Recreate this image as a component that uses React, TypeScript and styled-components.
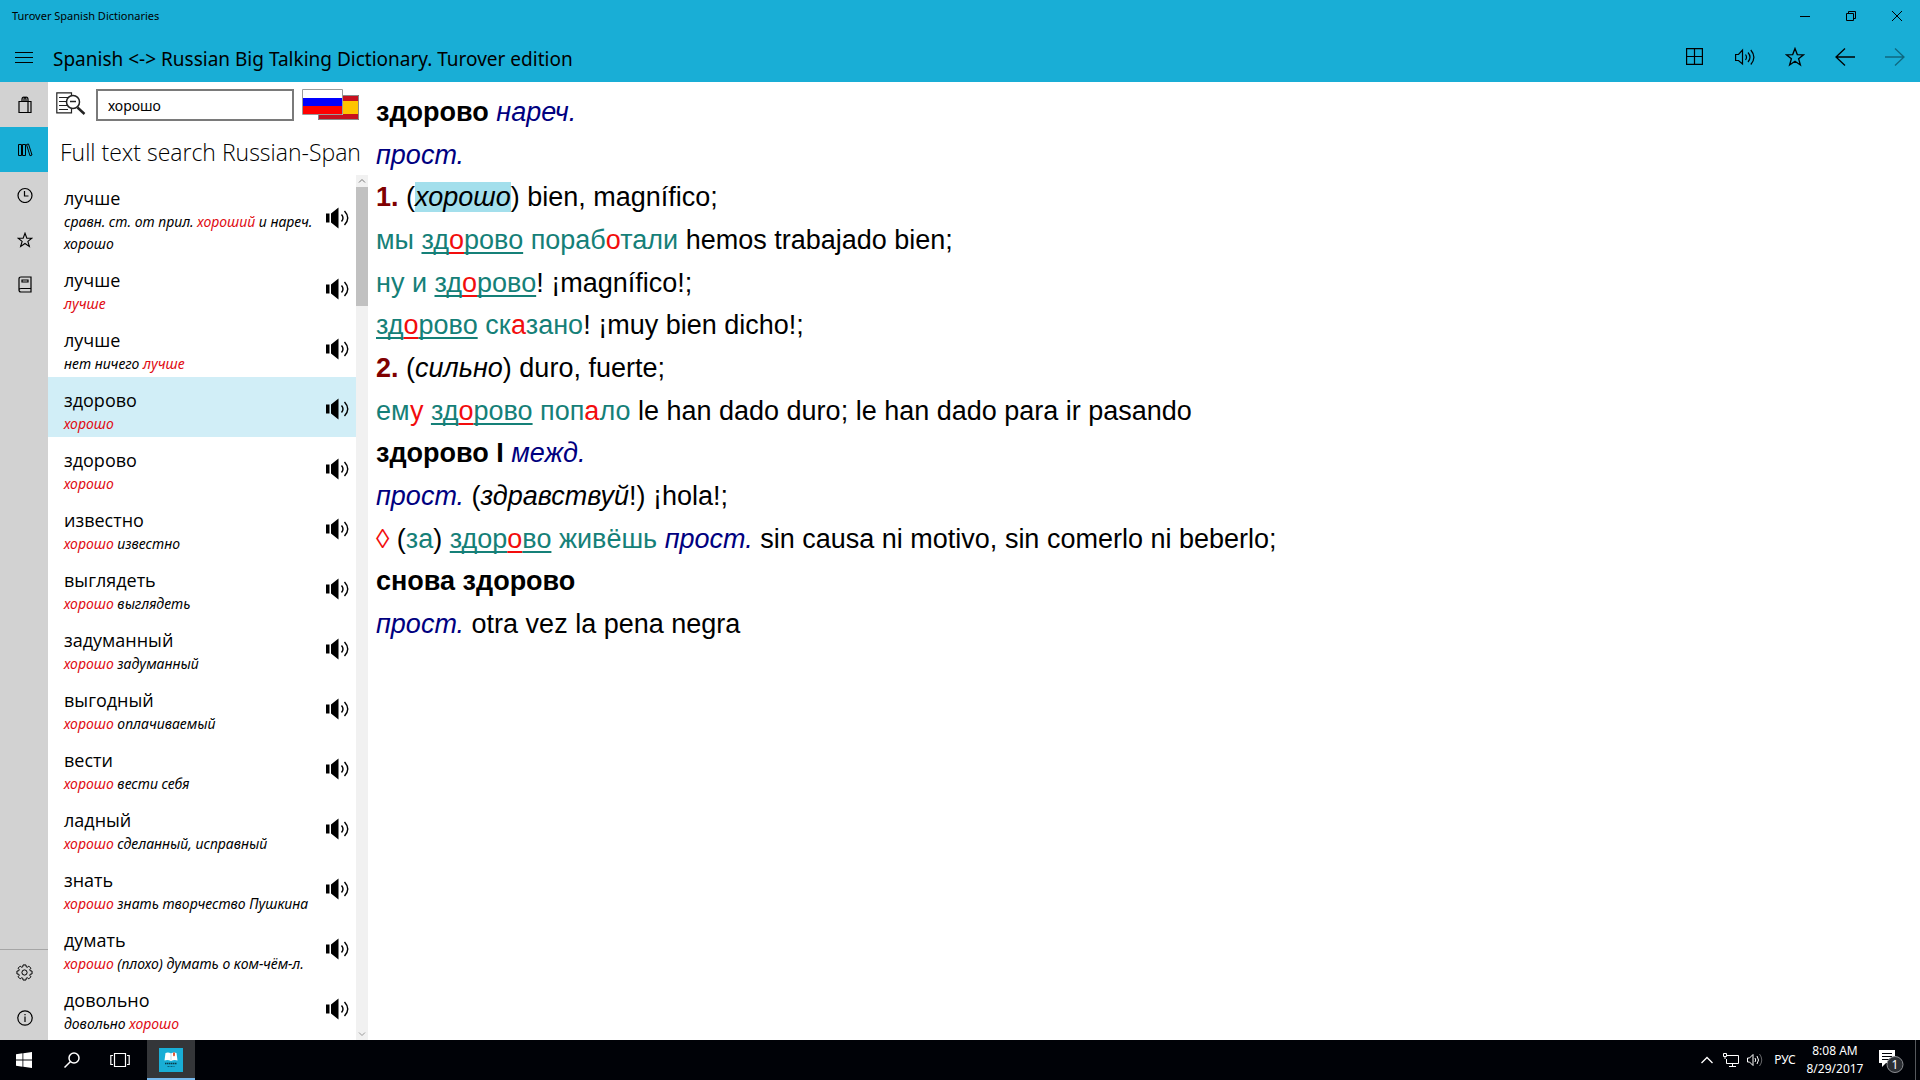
import React from "react";
import styled, { createGlobalStyle, css } from "styled-components";

const ui = `"Noto Sans", "Open Sans", sans-serif`;
const accent = "#19aed6";

const Global = createGlobalStyle`
  * { box-sizing: border-box; }
  html, body, #root { height: 100%; }
  body { margin: 0; background: #fff; color: #000; font-family: ${ui}; overflow: hidden; }
  button { border: 0; padding: 0; background: none; color: inherit; font: inherit; display: flex; align-items: center; justify-content: center; }
  svg { display: block; flex: none; }
`;

const Screen = styled.div`display: flex; flex-direction: column; height: 100vh;`;
const Header = styled.header`background: ${accent}; flex: none;`;
const TitleBar = styled.div`
  display: flex; align-items: center; justify-content: space-between;
  height: 32px; padding-left: 12px; font-size: 11px; line-height: 16px;
`;
const Cluster = styled.div`display: flex; height: 100%;`;
const WindowButton = styled.button`width: 46px;`;
const CommandBar = styled.div`display: flex; align-items: center; height: 50px;`;
const MenuButton = styled.button`width: 48px; height: 50px;`;
const Heading = styled.h1`margin: 0; padding: 3px 0 0 5px; flex: 1; font-size: 19px; font-weight: 400; line-height: 26px;`;
const CommandButton = styled.button<{ $dim?: boolean }>`width: 50px; height: 50px; opacity: ${p => (p.$dim ? 0.4 : 1)};`;

const Body = styled.div`display: flex; flex: 1; min-height: 0;`;
const Rail = styled.nav`
  width: 48px; flex: none; background: #d2d2d2; display: flex; flex-direction: column; justify-content: space-between;
`;
const RailGroup = styled.div<{ $ruled?: boolean }>`${p => p.$ruled && css`border-top: 1px solid #a6a6a6;`}`;
const RailButton = styled.button<{ $active?: boolean }>`
  width: 100%; height: 45px; padding-left: 1px; background: ${p => (p.$active ? accent : "transparent")};
`;

const SidePanel = styled.aside`width: 320px; flex: none; display: flex; flex-direction: column;`;
const SearchRow = styled.form`display: flex; align-items: center; gap: 8px; height: 46px; padding: 0 8px;`;
const SearchMode = styled.button`width: 32px; height: 32px; justify-content: flex-start;`;
const SearchInput = styled.input`
  width: 198px; height: 32px; border: 2px solid #7a7a7a; padding: 0 10px; font: 14px ${ui}; color: #000; outline: 0; border-radius: 0;
`;
const PanelTitle = styled.h2`
  margin: 0; padding: 8px 0 0 12px; height: 47px; font: 300 23px/32px "Open Sans", "Noto Sans", sans-serif; white-space: nowrap;
`;
const Results = styled.div`display: flex; flex: 1; min-height: 0;`;
const List = styled.ul`list-style: none; margin: 0; padding: 0; flex: 1; min-width: 0; overflow: hidden;`;
const Row = styled.li<{ $selected?: boolean }>`
  display: flex; align-items: center; padding: 10px 5px 2px 16px;
  background: ${p => (p.$selected ? "#d1eef7" : "transparent")};
`;
const RowText = styled.div`flex: 1; min-width: 0;`;
const Word = styled.div`font: 18px/26px "Open Sans", "Noto Sans", sans-serif;`;
const Gloss = styled.div`font-size: 14px; line-height: 22px; font-style: italic; white-space: nowrap;`;
const Hit = styled.span`color: #e00b12;`;
const Play = styled.button`width: 26px; height: 28px; flex: none; margin-bottom: 4px;`;
const Scrollbar = styled.div`width: 12px; background: #f1f1f1; display: flex; flex-direction: column;`;
const ScrollArrow = styled.button`width: 12px; height: 12px; flex: none;`;
const ScrollThumb = styled.div`height: 119px; background: #c1c1c1; margin-bottom: auto;`;

const Article = styled.main`
  flex: 1; min-width: 0; padding: 9px 8px; font: 27px/1.58 "Liberation Sans", Arial, sans-serif;
  p { margin: 0; }
`;
const Label = styled.i`color: #000080;`;
const Num = styled.b`color: #800000;`;
const Ru = styled.span`color: #158078;`;
const Key = styled.u`color: #158078; text-decoration-thickness: 2px; text-underline-offset: 3px; text-decoration-skip-ink: none;`;
const KeyStress = styled(Key)`color: #f20d0d;`;
const Stress = styled.span`color: #f20d0d;`;
const Marked = styled.mark`background: #a3dfec; color: #000; font-style: italic;`;

const Taskbar = styled.footer`
  height: 40px; flex: none; background: #000207; color: #fff; display: flex; justify-content: space-between;
`;
const TaskButton = styled.button<{ $active?: boolean }>`
  width: 48px; height: 40px;
  ${p => p.$active && css`margin-left: 3px; background: #343639; border-bottom: 2px solid #76b9ed; padding-top: 2px;`}
`;
const Tray = styled.div`display: flex; align-items: center; font-size: 12px; line-height: 18px;`;
const TrayButton = styled.button<{ $w: number }>`width: ${p => p.$w}px; height: 40px;`;
const Clock = styled.time`width: 64px; text-align: center; white-space: nowrap;`;
const ShowDesktop = styled.button`width: 5px; height: 40px; border-left: 1px solid #55585c;`;

type SvgProps = { w: number; h: number; children: React.ReactNode; sw?: number };
const Icon = ({ w, h, children, sw = 1 }: SvgProps) => (
  <svg width={w} height={h} viewBox={`0 0 ${w} ${h}`} fill="none" stroke="currentColor" strokeWidth={sw} aria-hidden="true">{children}</svg>
);

const star = "M10 1.5 12.3 7.6 18.6 7.8 13.6 11.7 15.4 18 10 14.3 4.6 18 6.4 11.7 1.4 7.8 7.7 7.6Z";

const Gear = () => {
  const pts: string[] = [];
  for (let i = 0; i < 8; i++) {
    [[-0.3, 5.9], [-0.19, 7.7], [0.19, 7.7], [0.3, 5.9]].forEach(([d, r]) => {
      const a = (i * Math.PI) / 4 + d;
      pts.push(`${(8.5 + r * Math.cos(a)).toFixed(2)} ${(8.5 + r * Math.sin(a)).toFixed(2)}`);
    });
  }
  return <Icon w={17} h={17}><path d={`M${pts.join("L")}Z`} /><circle cx="8.5" cy="8.5" r="2.6" /></Icon>;
};

const Speaker = () => (
  <Icon w={24} h={22} sw={1.4}>
    <path d="M0 6.5h3.5v9H0zM5 6.5 12.5.5v21L5 15.5z" fill="currentColor" stroke="none" />
    <path d="M15.5 7.5Q18.5 11 15.5 14.5M18.5 4Q25 11 18.5 18" />
  </Icon>
);

const results: { word: string; gloss: React.ReactNode; selected?: boolean }[] = [
  { word: "лучше", gloss: <>сравн. ст. от прил. <Hit>хороший</Hit> и нареч.<br />хорошо</> },
  { word: "лучше", gloss: <Hit>лучше</Hit> },
  { word: "лучше", gloss: <>нет ничего <Hit>лучше</Hit></> },
  { word: "здорово", gloss: <Hit>хорошо</Hit>, selected: true },
  { word: "здорово", gloss: <Hit>хорошо</Hit> },
  { word: "известно", gloss: <><Hit>хорошо</Hit> известно</> },
  { word: "выглядеть", gloss: <><Hit>хорошо</Hit> выглядеть</> },
  { word: "задуманный", gloss: <><Hit>хорошо</Hit> задуманный</> },
  { word: "выгодный", gloss: <><Hit>хорошо</Hit> оплачиваемый</> },
  { word: "вести", gloss: <><Hit>хорошо</Hit> вести себя</> },
  { word: "ладный", gloss: <><Hit>хорошо</Hit> сделанный, исправный</> },
  { word: "знать", gloss: <><Hit>хорошо</Hit> знать творчество Пушкина</> },
  { word: "думать", gloss: <><Hit>хорошо</Hit> (плохо) думать о ком-чём-л.</> },
  { word: "довольно", gloss: <>довольно <Hit>хорошо</Hit></> },
];

const Zdorovo = () => <><Key>зд</Key><KeyStress>о</KeyStress><Key>рово</Key></>;

export default function App() {
  return (
    <Screen>
      <Global />
      <Header>
        <TitleBar>
          <span>Turover Spanish Dictionaries</span>
          <Cluster>
            <WindowButton aria-label="Minimize"><Icon w={10} h={10}><path d="M0 5.5h10" /></Icon></WindowButton>
            <WindowButton aria-label="Restore"><Icon w={10} h={10}><path d="M.5 2.5h7v7h-7zM2.5 2.5v-2h7v7h-2" /></Icon></WindowButton>
            <WindowButton aria-label="Close"><Icon w={10} h={10}><path d="M0 0 10 10M10 0 0 10" /></Icon></WindowButton>
          </Cluster>
        </TitleBar>
        <CommandBar>
          <MenuButton aria-label="Menu"><Icon w={18} h={12}><path d="M0 1.5h18M0 6.5h18M0 11.5h18" /></Icon></MenuButton>
          <Heading>Spanish &lt;-&gt; Russian Big Talking Dictionary. Turover edition</Heading>
          <CommandButton aria-label="Grid"><Icon w={18} h={18} sw={1.2}><path d="M.6 .6h15.8v15.8H.6zM8.5 .6v15.8M.6 8.5h15.8" /></Icon></CommandButton>
          <CommandButton aria-label="Speak">
            <Icon w={20} h={18} sw={1.2}><path d="M.6 6.5H3.5L7.5 2v14L3.5 12.5H.6zM10.5 6.5Q12.5 9.2 10.5 12M13 4.5Q17 9.2 13 14M15.8 2Q22 9.2 15.8 16.5" /></Icon>
          </CommandButton>
          <CommandButton aria-label="Favorite"><Icon w={20} h={20} sw={1.3}><path d={star} /></Icon></CommandButton>
          <CommandButton aria-label="Back"><Icon w={20} h={18} sw={1.3}><path d="M20 9H1M10 .5 1 9l9 8.5" /></Icon></CommandButton>
          <CommandButton aria-label="Forward" $dim><Icon w={20} h={18} sw={1.3}><path d="M0 9h19M10 .5 19 9l-9 8.5" /></Icon></CommandButton>
        </CommandBar>
      </Header>

      <Body>
        <Rail>
          <RailGroup>
            <RailButton aria-label="Store"><Icon w={14} h={18} sw={1.2}><path d="M1 5.5h12v11H1zM10 5.5v11M4 5.5V3.5Q4 1 6 1t2 2.5V5.5M6 5.5V3.5Q6 1 8 1t2 2.5V5.5" /></Icon></RailButton>
            <RailButton aria-label="Library" $active><Icon w={16} h={14}><path d="M1.5 1.5h3v11h-3zM5.5 1.5h3v11h-3zM9.5 1.5 11.5 1 15 12 13 12.8z" /></Icon></RailButton>
            <RailButton aria-label="History"><Icon w={16} h={16} sw={1.2}><circle cx="8" cy="8.5" r="7" /><path d="M7.5 4v5h4" /></Icon></RailButton>
            <RailButton aria-label="Favorites"><svg width="16" height="16" viewBox="0 0 20 20" fill="none" stroke="currentColor" strokeWidth="1.4"><path d={star} /></svg></RailButton>
            <RailButton aria-label="Books"><Icon w={14} h={17} sw={1.2}><path d="M3 1h10v15H3Q1 16 1 14V3Q1 1 3 1M1 14Q1 12.5 3 12.5H13M4 4h6v2H4z" /></Icon></RailButton>
          </RailGroup>
          <RailGroup $ruled>
            <RailButton aria-label="Settings"><Gear /></RailButton>
            <RailButton aria-label="About"><Icon w={16} h={16} sw={1.2}><circle cx="8" cy="8" r="7.2" /><path d="M8 6.5v5.5M8 4v1.3" /></Icon></RailButton>
          </RailGroup>
        </Rail>

        <SidePanel>
          <SearchRow onSubmit={e => e.preventDefault()}>
            <SearchMode aria-label="Full text search">
              <svg width="30" height="26" viewBox="0 0 30 26" fill="none" stroke="#222" strokeWidth="1.2" aria-hidden="true">
                <path d="M15.500 4V.8H.8v20H15.500V17M3 5.500h9M3 9.500h7M3 13.500h8M3 17.500h9" />
                <circle cx="17" cy="10" r="6.500" fill="#fff" strokeWidth="1.500" />
                <path d="M14 9.500h6" strokeWidth="1.500" /><path d="m21.500 15.500 7 6.500" strokeWidth="2.400" />
              </svg>
            </SearchMode>
            <SearchInput aria-label="Search" defaultValue="хорошо" />
            <button aria-label="Switch language">
              <svg width="58" height="32" viewBox="0 0 58 32" aria-hidden="true">
                <path fill="#c8101e" d="M16 6h41v25H16z" /><path fill="#ffc400" d="M16 12h41v13H16z" />
                <path fill="none" stroke="#8a8a8a" d="M16.5 6.5h40v24h-40z" />
                <path fill="#fff" d="M0 0h41v26H0z" /><path fill="#00f" d="M0 9h41v8H0z" /><path fill="#f00" d="M0 17h41v8H0z" />
                <path fill="none" stroke="#9a9a9a" d="M.5 .5h40v25H.5z" />
              </svg>
            </button>
          </SearchRow>
          <PanelTitle>Full text search Russian-Span</PanelTitle>
          <Results>
            <List>
              {results.map((r, i) => (
                <Row key={i} $selected={r.selected}>
                  <RowText><Word>{r.word}</Word><Gloss>{r.gloss}</Gloss></RowText>
                  <Play aria-label={`Play ${r.word}`}><Speaker /></Play>
                </Row>
              ))}
            </List>
            <Scrollbar>
              <ScrollArrow aria-label="Scroll up"><Icon w={8} h={6}><path d="M1 4.5 4 1.5l3 3" stroke="#777" /></Icon></ScrollArrow>
              <ScrollThumb />
              <ScrollArrow aria-label="Scroll down"><Icon w={8} h={6}><path d="m1 1.5 3 3 3-3" stroke="#999" /></Icon></ScrollArrow>
            </Scrollbar>
          </Results>
        </SidePanel>

        <Article>
          <p><b>здорово</b> <Label>нареч.</Label></p>
          <p><Label>прост.</Label></p>
          <p><Num>1.</Num> (<Marked>хорошо</Marked>) bien, magnífico;</p>
          <p><Ru>мы </Ru><Zdorovo /><Ru> пораб<Stress>о</Stress>тали</Ru> hemos trabajado bien;</p>
          <p><Ru>ну и </Ru><Zdorovo />! ¡magnífico!;</p>
          <p><Zdorovo /><Ru> ск<Stress>а</Stress>зано</Ru>! ¡muy bien dicho!;</p>
          <p><Num>2.</Num> (<i>сильно</i>) duro, fuerte;</p>
          <p><Ru>ем<Stress>у</Stress> </Ru><Zdorovo /><Ru> поп<Stress>а</Stress>ло</Ru> le han dado duro; le han dado para ir pasando</p>
          <p><b>здорово I</b> <Label>межд.</Label></p>
          <p><Label>прост.</Label> (<i>здравствуй</i>!) ¡hola!;</p>
          <p><Stress>◊</Stress> (<Ru>за</Ru>) <Key>здор</Key><KeyStress>о</KeyStress><Key>во</Key><Ru> живёшь</Ru> <Label>прост.</Label> sin causa ni motivo, sin comerlo ni beberlo;</p>
          <p><b>снова здорово</b></p>
          <p><Label>прост.</Label> otra vez la pena negra</p>
        </Article>
      </Body>

      <Taskbar>
        <Cluster>
          <TaskButton aria-label="Start">
            <svg width="16" height="16" viewBox="0 0 16 16" fill="#fff" aria-hidden="true"><path d="M0 2.2 6.5 1.3V7.5H0zM7.3 1.2 16 0V7.5H7.3zM0 8.4H6.5V14.7L0 13.8zM7.3 8.4H16V16L7.3 14.8z" /></svg>
          </TaskButton>
          <TaskButton aria-label="Search"><Icon w={16} h={16} sw={1.5}><circle cx="10" cy="6" r="5" /><path d="M6.5 9.5.5 15.5" /></Icon></TaskButton>
          <TaskButton aria-label="Task view"><Icon w={20} h={16} sw={1.2}><path d="M4.5 1.5h11v13h-11zM3 3.5H.8v9H3M17 3.5h2.2v9H17" /></Icon></TaskButton>
          <TaskButton aria-label="Turover Spanish Dictionaries" $active>
            <svg width="24" height="24" viewBox="0 0 24 24" aria-hidden="true">
              <path fill={accent} d="M0 0h24v24H0z" />
              <path fill="#fff" d="M6.5 5Q9.5 4 12 5.5 14.5 4 17.5 5L18.5 12.5Q15 11.5 12 13 9 11.5 5.5 12.5z" />
              <path stroke="#a9dbe9" strokeWidth=".8" d="M12 5.5V13" />
              <path fill="#e05a3a" d="M14 4.5h2v4l-1-1-1 1z" />
              <path stroke="#0b3b4a" strokeWidth="1.5" strokeDasharray="1.5 .5" d="M6 15.5h12" /><path stroke="#0b6078" d="M8.5 18.5h7" strokeDasharray="2 1" />
            </svg>
          </TaskButton>
        </Cluster>
        <Tray>
          <TrayButton $w={24} aria-label="Show hidden icons"><Icon w={12} h={8} sw={1.3}><path d="M.5 7 6 1.5 11.5 7" /></Icon></TrayButton>
          <TrayButton $w={24} aria-label="Network"><Icon w={16} h={14}><path d="M4 2.5h11.5v8H3.5V6M9.5 10.5v3M6 13.5h7M.5 .5h3v3h-3zM2 3.5V6" /></Icon></TrayButton>
          <TrayButton $w={24} aria-label="Volume"><Icon w={16} h={14}><path d="M.5 5h2L6 1.5v11L2.5 9H.5zM8 5Q9.5 7 8 9M10 3Q13 7 10 11" /><path d="M12.5 1Q17 7 12.5 13" opacity=".4" /></Icon></TrayButton>
          <TrayButton $w={36} aria-label="Input language">РУС</TrayButton>
          <Clock>8:08 AM<br />8/29/2017</Clock>
          <TrayButton $w={48} aria-label="Notifications, 1 new">
            <svg width="26" height="26" viewBox="0 0 26 26" aria-hidden="true">
              <path fill="#fff" d="M1 3h16v13H8l-4 4v-4H1z" /><path stroke="#000207" d="M4 6.5h10M4 9.5h10M4 12.5h7" />
              <circle cx="17" cy="17.5" r="8" fill="#2b2e33" stroke="#8c8f93" />
              <text x="17" y="22" fill="#fff" fontSize="12" textAnchor="middle" fontFamily="Noto Sans, sans-serif">1</text>
            </svg>
          </TrayButton>
          <ShowDesktop aria-label="Show desktop" />
        </Tray>
      </Taskbar>
    </Screen>
  );
}
